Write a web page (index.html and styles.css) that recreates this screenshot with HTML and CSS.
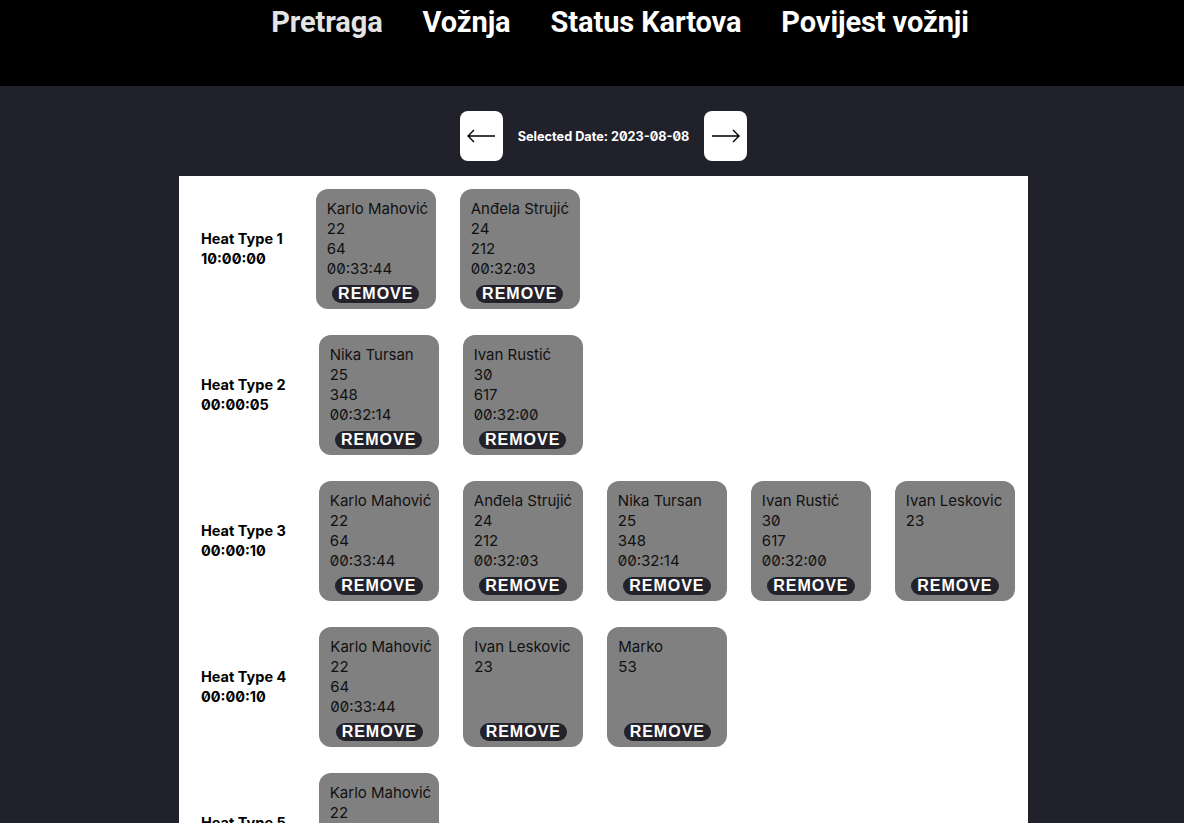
FILE: index.html
```html
<!DOCTYPE html>
<html>
<head>
<meta charset="utf-8">
<link rel="stylesheet" href="styles.css">
</head>
<body>
<header class="topbar">
  <nav class="nav">
    <a class="nav-link nav-link-dim">Pretraga</a>
    <a class="nav-link">Vožnja</a>
    <a class="nav-link">Status Kartova</a>
    <a class="nav-link">Povijest vožnji</a>
  </nav>
</header>
<main class="main">
  <div class="date-row">
    <button class="arrow-btn" aria-label="previous"><svg width="30" height="14" viewBox="0 0 30 14"><path d="M29 7H2M8 1L2 7l6 6" fill="none" stroke="#000" stroke-width="1.4"/></svg></button>
    <span class="date-text">Selected Date: 2023-08-08</span>
    <button class="arrow-btn" aria-label="next"><svg width="30" height="14" viewBox="0 0 30 14"><path d="M1 7h27M22 1l6 6-6 6" fill="none" stroke="#000" stroke-width="1.4"/></svg></button>
  </div>
  <section class="panel">
    <div class="heat">
      <div class="heat-label">Heat Type 1<br>10:00:00</div>
      <div class="cards">
        <div class="card"><div class="card-info">Karlo Mahović<br>22<br>64<br>00:33:44</div><button class="remove">REMOVE</button></div>
        <div class="card"><div class="card-info">Anđela Strujić<br>24<br>212<br>00:32:03</div><button class="remove">REMOVE</button></div>
      </div>
    </div>
    <div class="heat">
      <div class="heat-label">Heat Type 2<br>00:00:05</div>
      <div class="cards">
        <div class="card"><div class="card-info">Nika Tursan<br>25<br>348<br>00:32:14</div><button class="remove">REMOVE</button></div>
        <div class="card"><div class="card-info">Ivan Rustić<br>30<br>617<br>00:32:00</div><button class="remove">REMOVE</button></div>
      </div>
    </div>
    <div class="heat">
      <div class="heat-label">Heat Type 3<br>00:00:10</div>
      <div class="cards">
        <div class="card"><div class="card-info">Karlo Mahović<br>22<br>64<br>00:33:44</div><button class="remove">REMOVE</button></div>
        <div class="card"><div class="card-info">Anđela Strujić<br>24<br>212<br>00:32:03</div><button class="remove">REMOVE</button></div>
        <div class="card"><div class="card-info">Nika Tursan<br>25<br>348<br>00:32:14</div><button class="remove">REMOVE</button></div>
        <div class="card"><div class="card-info">Ivan Rustić<br>30<br>617<br>00:32:00</div><button class="remove">REMOVE</button></div>
        <div class="card"><div class="card-info">Ivan Leskovic<br>23</div><button class="remove">REMOVE</button></div>
      </div>
    </div>
    <div class="heat">
      <div class="heat-label">Heat Type 4<br>00:00:10</div>
      <div class="cards">
        <div class="card"><div class="card-info">Karlo Mahović<br>22<br>64<br>00:33:44</div><button class="remove">REMOVE</button></div>
        <div class="card"><div class="card-info">Ivan Leskovic<br>23</div><button class="remove">REMOVE</button></div>
        <div class="card"><div class="card-info">Marko<br>53</div><button class="remove">REMOVE</button></div>
      </div>
    </div>
    <div class="heat">
      <div class="heat-label">Heat Type 5<br>00:00:15</div>
      <div class="cards">
        <div class="card"><div class="card-info">Karlo Mahović<br>22<br>64<br>00:33:44</div><button class="remove">REMOVE</button></div>
      </div>
    </div>
  </section>
</main>
</body>
</html>
```

FILE: styles.css
```css
html, body {
  margin: 0;
  padding: 0;
}
body {
  background: #21212b;
  font-family: Inter, "Liberation Sans", sans-serif;
  font-feature-settings: "zero" 1;
}
.topbar {
  background: #000;
  height: 86px;
}
.nav {
  display: flex;
  justify-content: center;
  gap: 40px;
  padding-left: 56px;
  padding-top: 4px;
}
.nav-link {
  font-family: Roboto, "Liberation Sans", sans-serif;
  font-weight: 700;
  font-size: 29px;
  line-height: 36px;
  color: #fff;
  letter-spacing: -0.1px;
}
.nav-link-dim {
  color: #e4e4e4;
}
.main {
  padding-left: 23px;
  padding-top: 25px;
}
.date-row {
  display: flex;
  justify-content: center;
  align-items: center;
  gap: 15px;
}
.arrow-btn {
  width: 43px;
  height: 50px;
  border: none;
  border-radius: 8px;
  background: #fff;
  padding: 0;
  display: flex;
  align-items: center;
  justify-content: center;
}
.date-text {
  color: #fff;
  font-weight: 700;
  font-size: 12.7px;
}
.panel {
  background: #fff;
  width: 849px;
  margin: 15px auto 0;
  padding: 13px 0 40px 22px;
  box-sizing: border-box;
  display: flex;
  flex-direction: column;
  gap: 26px;
}
.heat {
  display: flex;
  align-items: center;
}
.heat-label {
  font-weight: 700;
  font-size: 14.5px;
  line-height: 20px;
  color: #000;
  margin-right: 33px;
}
.cards {
  display: flex;
  gap: 24px;
}
.card {
  width: 120px;
  height: 120px;
  box-sizing: border-box;
  background: #808080;
  border-radius: 12px;
  padding: 10px 0 6px 11px;
  display: flex;
  flex-direction: column;
}
.card-info {
  font-size: 15px;
  line-height: 20px;
  color: #111;
  flex: 1;
}
.remove {
  align-self: center;
  margin-left: -11px;
  background: #23222b;
  color: #fff;
  border: none;
  border-radius: 9px;
  height: 18px;
  padding: 0 6px;
  font-family: "Liberation Sans", Arial, sans-serif;
  font-weight: 700;
  font-size: 16px;
  line-height: 18px;
  letter-spacing: 1px;
}
```
